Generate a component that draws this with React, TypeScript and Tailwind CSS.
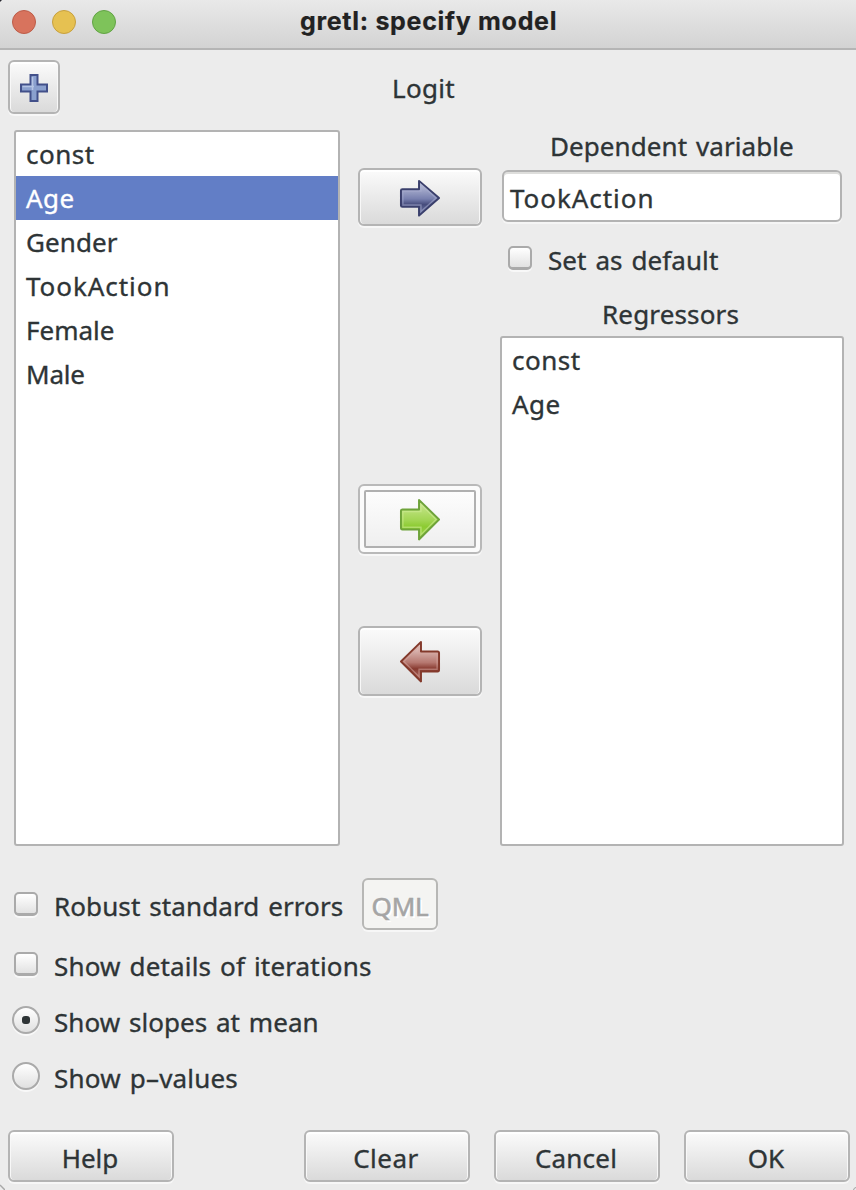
import React from "react";

const RIGHT = "M2 12.5 Q2 11 3.5 11 H20.5 V2 L41 20.5 L20.5 39.5 V30 H3.5 Q2 30 2 28.5 Z";

type ArrowProps = { id: string; top: string; mid: string; low: string; edge: string; glow: string; flip?: boolean; flat?: boolean };

function Arrow({ id, top, mid, low, edge, glow, flip, flat }: ArrowProps) {
  return (
    <svg width="42" height={flat ? 39 : 44} viewBox="0 0 43 42" preserveAspectRatio="none" className={flip ? "mt-0.5 -scale-x-100" : "mt-0.5"}>
      <defs>
        <linearGradient id={id} x1="0" y1="0" x2="0" y2="1">
          <stop offset="0.1" stopColor={top} />
          <stop offset="0.52" stopColor={mid} />
          <stop offset="0.68" stopColor={low} />
          <stop offset="1" stopColor={mid} />
        </linearGradient>
      </defs>
      <path d={RIGHT} fill={`url(#${id})`} stroke={edge} strokeWidth="2" strokeLinejoin="round" />
      <path d="M4 28 V13 H22.5 V6 L38 20.5 L22.5 35 V28 Z" fill="none" stroke={glow} strokeWidth="1.4" opacity="0.55" />
    </svg>
  );
}

const raised =
  "rounded-[6px] border-2 border-[#b4b4b4] bg-linear-to-b from-[#fbfbfb] to-[#dadada] shadow-[0_2px_0_#f7f7f7,inset_0_2px_0_#ffffff,inset_1px_0_0_#f8f8f8,inset_-1px_0_0_#f8f8f8]";

function Button({ label, className, text }: { label: string; className: string; text: string }) {
  return (
    <button className={`${raised} flex h-[52px] w-[166px] shrink-0 items-center justify-center ${className}`}>
      <span className={`relative top-[2px] leading-[44px] ${text}`}>{label}</span>
    </button>
  );
}

function Check({ label, text }: { label: string; text: string }) {
  return (
    <label className="flex items-start whitespace-nowrap">
      <span className="h-6 w-6 shrink-0 rounded-[5px] border-2 border-b-[3px] border-[#aaaaaa] bg-linear-to-b from-[#ffffff] to-[#e2e2e2] shadow-[0_2px_0_#f8f8f8]" />
      <span className={`ml-4 mt-[-2px] leading-8 ${text}`}>{label}</span>
    </label>
  );
}

function Radio({ label, text, on }: { label: string; text: string; on?: boolean }) {
  return (
    <label className="flex h-14 items-start whitespace-nowrap">
      <span className="flex h-7 w-7 shrink-0 items-center justify-center rounded-full border-2 border-[#aaaaaa] bg-linear-to-b from-[#ffffff] to-[#e0e0e0] shadow-[0_2px_0_#f8f8f8]">
        {on && <span className="h-2 w-2 rounded-[3px] bg-[#2e3436]" />}
      </span>
      <span className={`ml-[14px] leading-8 ${text}`}>{label}</span>
    </label>
  );
}

const variables = [
  { name: "const", text: "tracking-[0.5px]" },
  { name: "Age", text: "tracking-[0.5px]", selected: true },
  { name: "Gender", text: "tracking-[0.1px]" },
  { name: "TookAction", text: "tracking-[0.95px]" },
  { name: "Female", text: "tracking-[0px]" },
  { name: "Male", text: "tracking-[-0.2px]" },
];

export default function App() {
  return (
    <div className="relative flex h-[1190px] w-[856px] flex-col overflow-hidden bg-[#ececec] font-['Noto_Sans',sans-serif] text-[26px] text-[#2e3436] [-webkit-text-stroke:0.35px] [word-spacing:2px]">
      <svg width="5" height="6" className="absolute bottom-0 left-0">
        <path d="M0 1 L5 6" stroke="#a8a8a8" strokeWidth="1.5" />
      </svg>
      <svg width="3" height="3" className="absolute bottom-0 right-0">
        <path d="M3 0 L0 3" stroke="#b0b0b0" strokeWidth="1.2" />
      </svg>
      <svg width="2" height="2" className="absolute left-0 top-0">
        <path d="M0 0 H2 L0 2 Z" fill="#26262e" />
      </svg>
      <header className="flex h-[50px] shrink-0 items-start border-b-2 border-[#b5b5b5] bg-linear-to-b from-[#e9e9e9] to-[#d3d3d3] pl-3">
        <div className="flex gap-4 pt-[10px]">
          <span className="h-6 w-6 rounded-full border border-[#bd5c48] bg-[#d8735d]" />
          <span className="h-6 w-6 rounded-full border border-[#c7a03e] bg-[#e6c151]" />
          <span className="h-6 w-6 rounded-full border border-[#62a345] bg-[#7ec35a]" />
        </div>
        <h1 className="ml-[184px] whitespace-nowrap font-[Inter,sans-serif] text-[25px] font-bold leading-[42px] tracking-[0.7px] text-[#222222] [-webkit-text-stroke:0.2px] [word-spacing:0px]">gretl: specify model</h1>
      </header>

      <div className="flex h-20 shrink-0 items-start pl-2 pt-[10px]">
        <button className={`${raised} flex h-[54px] w-[52px] items-center justify-center`}>
          <svg width="30" height="30" viewBox="0 0 30 30" className="mt-0.5">
            <path d="M11.5 2 H18.5 V11.5 H28 V18.5 H18.5 V28 H11.5 V18.5 H2 V11.5 H11.5 Z" fill="#8aa0ce" stroke="#42508a" strokeWidth="2" />
            <path d="M13.5 17 V4 M3.5 13.5 H15" stroke="#b4c4e4" strokeWidth="1.6" />
          </svg>
        </button>
        <span className="ml-[332px] mt-[6px] leading-[44px] tracking-[0.3px]">Logit</span>
      </div>

      <main className="flex h-[716px] shrink-0 pl-[14px]">
        <ul className="w-[326px] rounded-[3px] border-2 border-[#b3b3b3] bg-white">
          {variables.map((v) => (
            <li key={v.name} className={`h-11 pl-[10px] leading-[44px] ${v.text} ${v.selected ? "bg-[#627ec6] text-white" : ""}`}>
              {v.name}
            </li>
          ))}
        </ul>

        <div className="ml-[18px] flex w-[124px] flex-col pt-[38px]">
          <button className={`${raised} flex h-[58px] items-center justify-center`}>
            <Arrow id="navy" top="#b9bed8" mid="#777fae" low="#464c7c" edge="#3a3f6c" glow="#a7add0" flat />
          </button>
          <button className="mt-[258px] flex h-[70px] rounded-[6px] border-2 border-[#b9b9b9] bg-[#fbfbfb] p-1 shadow-[0_2px_0_#f7f7f7]">
            <span className="flex h-full w-full items-center justify-center rounded-[2px] border-2 border-[#b0b0b0] bg-linear-to-b from-[#fdfdfd] to-[#efefef]">
              <Arrow id="green" top="#c6e58a" mid="#a1d552" low="#8ccb31" edge="#6ea33a" glow="#d0ec98" />
            </span>
          </button>
          <button className={`${raised} mt-[72px] flex h-[70px] items-center justify-center`}>
            <Arrow id="red" top="#e5c9c5" mid="#b67870" low="#87392f" edge="#83392b" glow="#d3a49c" flip />
          </button>
        </div>

        <section className="ml-[18px] flex w-[344px] flex-col">
          <h2 className="h-10 whitespace-nowrap pl-[50px] leading-8 tracking-[0.08px]">Dependent variable</h2>
          <div className="mx-0.5 h-[52px] rounded-[6px] border-2 border-[#b3b3b3] bg-white pl-[6px] shadow-[0_2px_0_#f5f5f5,inset_0_2px_0_#dededc]">
            <span className="leading-[52px] tracking-[0.95px]">TookAction</span>
          </div>
          <div className="mt-6 h-[49px] pl-2">
            <Check label="Set as default" text="tracking-[0.08px]" />
          </div>
          <h2 className="h-[41px] whitespace-nowrap pl-[102px] leading-[38px] tracking-[0.15px]">Regressors</h2>
          <ul className="flex-1 rounded-[3px] border-2 border-[#b3b3b3] bg-white">
            <li className="h-11 pl-[10px] leading-[44px] tracking-[0.5px]">const</li>
            <li className="h-11 pl-[10px] leading-[44px] tracking-[0.5px]">Age</li>
          </ul>
        </section>
      </main>

      <section className="flex h-[284px] shrink-0 flex-col pl-3 pt-8">
        <div className="flex h-[74px] items-start pl-0.5 pt-[14px]">
          <Check label="Robust standard errors" text="w-[308px] tracking-[0.1px]" />
          <button className="-mt-[14px] flex h-[52px] w-[76px] items-center justify-center rounded-[6px] border-2 border-[#b7b7b5] bg-[#f4f4f2] text-[#a5a5a5] shadow-[0_2px_0_#f7f7f7] [-webkit-text-stroke:0.6px] [text-shadow:2px_2px_0_#ffffff]">
            <span className="relative top-[2px] leading-[44px] tracking-[-0.2px]">QML</span>
          </button>
        </div>
        <div className="h-[54px] pl-0.5">
          <Check label="Show details of iterations" text="tracking-[0.16px]" />
        </div>
        <Radio label="Show slopes at mean" text="tracking-[0.04px]" on />
        <Radio label="Show p–values" text="tracking-[0.2px]" />
      </section>

      <footer className="flex shrink-0 pl-2">
        <Button label="Help" className="" text="-left-px" />
        <Button label="Clear" className="ml-[130px]" text="-left-px tracking-[0.5px]" />
        <Button label="Cancel" className="ml-6" text="-left-px tracking-[0.2px]" />
        <Button label="OK" className="ml-6" text="-left-px" />
      </footer>
    </div>
  );
}
